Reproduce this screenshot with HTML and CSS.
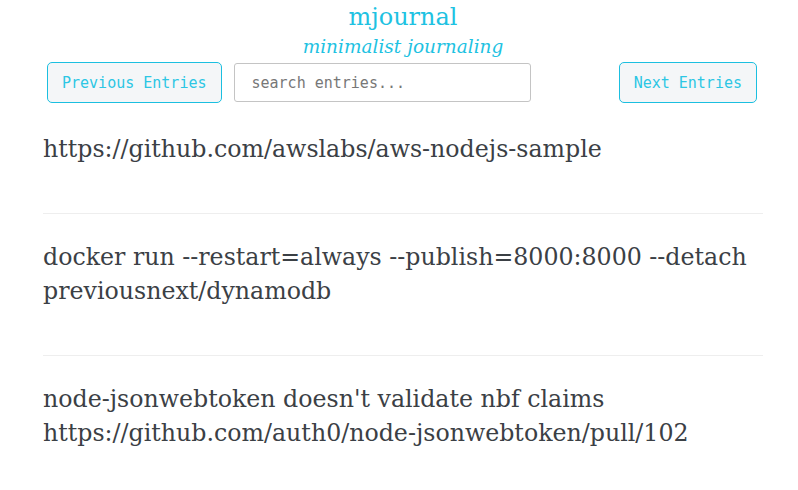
FILE: index.html
```html
<!DOCTYPE html>
<html lang="en">
<head>
<meta charset="utf-8">
<title>mjournal</title>
<link rel="stylesheet" href="styles.css">
</head>
<body>
<div class="page">
  <header class="header">
    <h1 class="title">mjournal</h1>
    <p class="tagline">minimalist journaling</p>
  </header>
  <nav class="toolbar">
    <div class="toolbar-left">
      <button class="btn" type="button">Previous Entries</button>
      <input class="search" type="text" placeholder="search entries...">
    </div>
    <button class="btn" type="button">Next Entries</button>
  </nav>
  <ul class="entries">
    <li class="entry">https://github.com/awslabs/aws-nodejs-sample</li>
    <li class="entry">docker run --restart=always --publish=8000:8000 --detach previousnext/dynamodb</li>
    <li class="entry">node-jsonwebtoken doesn't validate nbf claims<br>https://github.com/auth0/node-jsonwebtoken/pull/102</li>
  </ul>
</div>
</body>
</html>
```

FILE: styles.css
```css
html, body {
  margin: 0;
  padding: 0;
  background: #ffffff;
}

.page {
  width: 720px;
  margin-left: 43px;
  font-family: "DejaVu Serif", serif;
}

.header {
  text-align: center;
}

.title {
  margin: 3px 0 0;
  font-size: 24px;
  line-height: 28px;
  font-weight: normal;
  color: #1ec2e2;
}

.tagline {
  margin: 3px 0 0;
  font-size: 18.5px;
  line-height: 26px;
  font-style: italic;
  color: #1ec2e2;
}

.toolbar {
  display: flex;
  justify-content: space-between;
  align-items: center;
  padding: 2px 6px 0 4px;
}

.toolbar-left {
  display: flex;
  align-items: center;
  gap: 12px;
}

.btn {
  box-sizing: border-box;
  height: 41px;
  padding: 1px 14px 0;
  font-family: "DejaVu Sans Mono", monospace;
  font-size: 15px;
  color: #2cc6e4;
  background: #f4f6f8;
  border: 1px solid #1bbfe0;
  border-radius: 5px;
}

.search {
  box-sizing: border-box;
  width: 297px;
  height: 39px;
  padding: 1px 17px 0;
  font-family: "DejaVu Sans Mono", monospace;
  font-size: 15px;
  color: #555;
  background: #fff;
  border: 1px solid #c4c4c4;
  border-radius: 3px;
}

.search::placeholder {
  color: #777;
}

.entries {
  list-style: none;
  margin: 3px 0 0;
  padding: 0;
}

.entry {
  padding: 26px 0 47px;
  border-bottom: 1px solid #eeeeee;
  font-size: 23.7px;
  line-height: 34px;
  color: #3b4045;
}

.entry:last-child {
  border-bottom: none;
}
```
